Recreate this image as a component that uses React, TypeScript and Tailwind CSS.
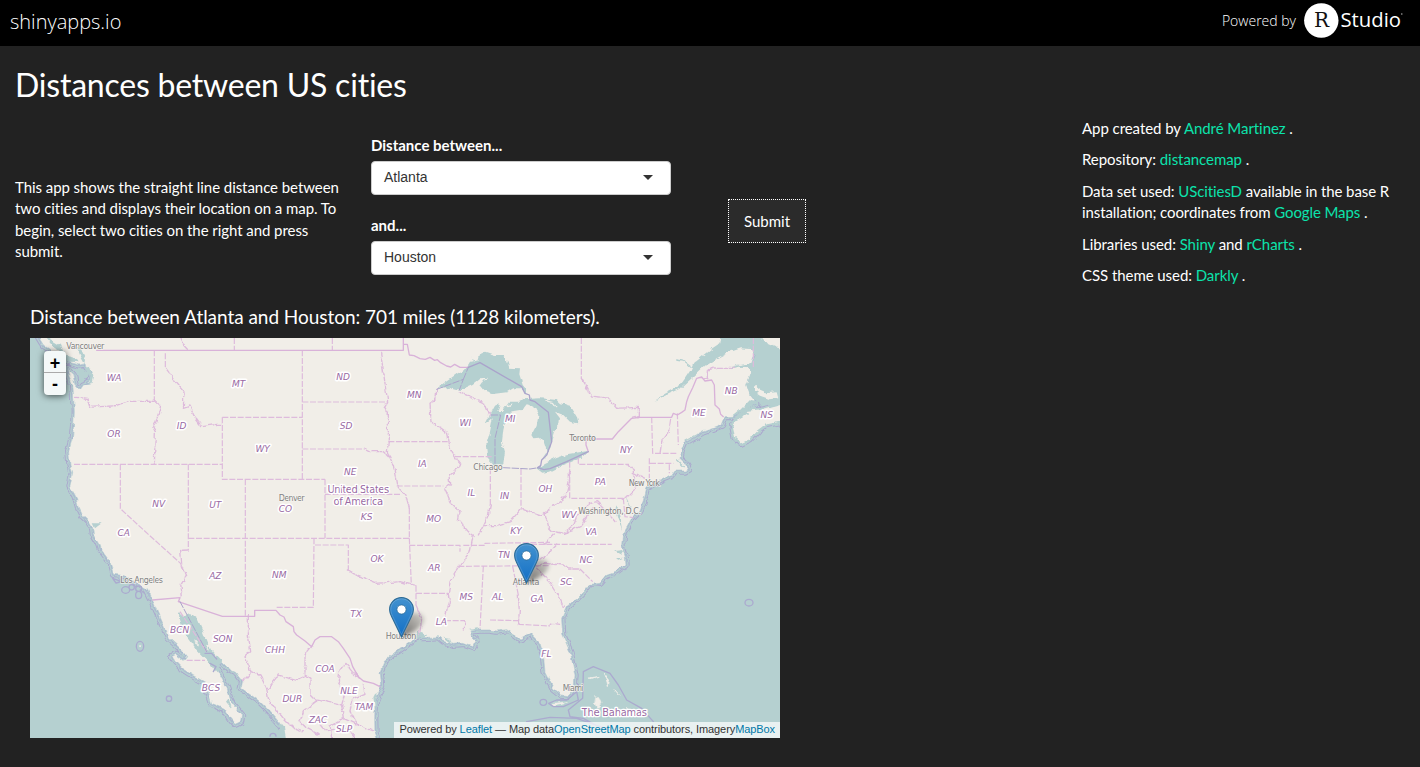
import React from "react";

const WATER = "#b5d0d0";
const LAND = "#f1eee8";

const MAINLAND =
  "M22 0L40 30 75 55 105 72 125 84 150 90 165 86 168 98 190 108 180 135 172 140 185 143 160 150 150 165 136 150 128 118 112 102 118 125 128 150 131 190 133 230 131 270 127 310 116 350 120 388 128 415 120 455 135 480 145 515 160 545 178 562 188 578 190 600 205 625 210 640 240 680 250 718 285 722 325 748 352 764 365 790 375 815 398 868 415 908 450 940 470 965 462 976 438 958 425 965 436 980 455 1000 490 1022 525 1042 535 1075 545 1105 580 1120 600 1150 615 1168 632 1160 635 1140 612 1112 600 1090 590 1060 575 1030 562 1005 550 985 560 972 575 980 595 1000 615 1010 638 1040 634 1060 660 1078 690 1100 720 1130 750 1165 765 1190 770 1230 1050 1230 1035 1195 1034 1150 1036 1100 1055 1055 1050 1010 1062 980 1100 950 1135 925 1150 912 1165 905 1180 908 1225 905 1240 918 1270 928 1300 925 1328 935 1338 918 1325 905 1320 888 1350 885 1380 885 1400 888 1430 884 1455 900 1470 912 1500 895 1530 925 1540 960 1545 1010 1570 1060 1595 1080 1612 1082 1632 1062 1635 1020 1620 950 1598 900 1595 850 1610 815 1640 790 1665 765 1680 745 1710 742 1730 718 1760 708 1788 688 1785 660 1775 630 1778 600 1795 570 1802 555 1830 525 1840 500 1850 458 1900 432 1925 422 1935 408 1965 408 1975 402 1965 385 1950 370 1955 345 1965 322 1990 308 2020 290 2050 280 2075 270 2085 245 2110 244 2140 225 2180 205 2160 180 2150 150 2165 110 2150 95 2125 90 2100 98 2140 92 2165 85 2175 55 2165 40 2110 35 2075 0Z";
const NOVA_SCOTIA =
  "M2108 270L2120 255 2155 235 2150 228 2200 222 2260 205 2260 258 2210 268 2180 290 2160 312 2132 325 2115 308Z";
const PEI = "M2172 155L2180 148 2182 165 2205 175 2240 172 2245 190 2220 193 2190 182 2172 170Z";
const CAPE_BRETON = "M2192 0L2215 28 2240 38 2260 44 2260 0Z";
const ST_LAWRENCE =
  "M1870 198L1905 176 1945 156 1962 135 1982 105 1990 86 2015 66 2050 40 2068 28 2072 0 2260 0 2260 220 2185 200 2160 180 2150 150 2165 110 2150 95 2125 96 2095 100 2130 90 2165 85 2178 60 2165 42 2130 40 2095 52 2060 70 2025 92 1998 118 1972 142 1950 162 1910 180Z";
const SUPERIOR =
  "M1220 163L1245 145 1280 120 1305 105 1320 80 1335 78 1325 68 1345 75 1350 58 1365 50 1395 60 1418 60 1430 75 1438 98 1470 100 1468 118 1478 150 1485 158 1485 175 1470 160 1450 160 1430 172 1395 176 1360 165 1348 150 1358 136 1375 128 1350 130 1325 150 1290 165 1270 160 1255 155Z";
const MICHIGAN =
  "M1390 390L1372 370 1368 330 1380 290 1388 250 1366 268 1380 240 1395 212 1410 205 1402 228 1415 228 1435 200 1470 200 1480 193 1530 190 1580 195 1590 205 1620 212 1640 245 1645 265 1620 260 1600 240 1575 230 1590 250 1588 270 1572 290 1562 325 1553 355 1535 372 1550 350 1540 320 1530 308 1510 310 1504 300 1520 270 1525 240 1510 210 1490 205 1472 228 1432 235 1420 285 1416 320 1425 350 1420 385Z";
const ERIE = "M1522 400L1545 384 1575 370 1610 358 1675 347 1655 368 1625 380 1595 392 1560 410 1540 413Z";
const GULF_OF_CALIFORNIA =
  "M447 832L460 842 480 834 502 850 515 880 530 920 545 948 575 978 570 1000 562 1015 540 985 520 965 500 945 480 915 458 890 448 860Z";

const STRAIGHT =
  "M373 46V195M406 55V98M132 388H577M271 388V521L355 598 455 688M475 388V645M577 247H817M577 247V433H885M817 46V433M646 433V843M475 610H1138M885 433V610M885 478H1115M817 201H1073M817 342H1005M1075 320H1253M1100 453H1240M1275 365H1385M1381 400V510M1473 402V515M1619 380V490H1780M1645 368V388H1795M1138 520V610M852 610V630H955V705M852 610L850 817H738M1138 631H1290V650M1158 775H1255M1138 610L1144 750M1300 631H1365V625L1560 622M1285 694L1560 692M1360 694L1350 880M1448 694L1465 780M1380 855L1465 857 1468 868 1560 873M1480 628H1745M1650 702L1688 740M1865 247L1868 355H1940M1860 385H1930M1918 388V415M1942 235L1945 330M1654 9V130M613 9V46M907 9V46M1245 857H1305M1158 752V810M1780 490L1785 545 1810 548M470 976H525M1858 370V430M2170 9V100M450 830L530 950";
const RIVERS =
  "M373 195L392 213 378 260 368 275 376 290 373 388M406 98L430 130 462 168 460 220 480 213 497 250 515 275 560 268 577 268M137 187L170 190 180 217 260 212 300 199 373 199M475 645L452 646 455 688 470 722 452 750 457 785M1005 342L1020 350 1060 350 1075 365M1052 50L1060 110 1073 200 1063 215 1075 235V320L1072 350 1090 390 1100 450 1130 490 1138 520M1220 165L1218 190 1200 205 1203 260 1250 295 1255 330 1275 365 1292 385 1285 400 1260 420 1262 450 1243 460 1260 500 1290 530 1285 555 1315 590 1330 600 1320 650 1290 690 1260 740 1255 780 1258 800 1245 850M1305 857L1303 885M1381 510L1375 540 1360 572 1345 600M1360 572H1400L1440 560 1475 520 1500 530 1530 540 1550 535 1565 515 1590 500 1610 475 1618 440V400M1780 490L1800 480 1815 465 1820 445 1810 420V405L1795 388M1810 415L1848 435M1285 170L1320 185 1365 205 1378 240M955 705L980 720 1040 745 1110 740 1145 750H1158M1158 810L1175 850 1168 905M1465 780L1468 830 1465 868M1560 873L1568 865 1590 868M1520 700L1560 740 1585 780 1600 815M1520 695L1540 685 1600 690 1615 702H1650M1580 630L1560 650 1520 680M1545 535L1555 575 1570 590 1600 595 1630 570 1640 545 1680 505 1700 500 1730 530 1755 560M1570 600L1545 628M1925 250L1920 285 1900 310 1893 355M1654 130L1685 183 1735 190 1760 220 1825 217V245L1805 250M2015 128H2035V105L2060 97 2110 97M1600 595L1650 575 1690 520M655 844L655 900 662 950 645 965 663 1010 640 1040M663 1010L690 1020 710 1060 715 1090 735 1120 760 1150 790 1180 820 1190M715 1060L745 1020 800 1037 825 1025M845 935L825 960 825 1020 840 1030 840 1080 860 1100 820 1130 810 1160 830 1180 870 1200M985 1030L945 985 930 1005 925 1040 945 1075 935 1110 860 1095M1000 1050L1005 1075 970 1090 960 1130 985 1170 1030 1185M935 1110L940 1150 900 1170 905 1209M940 1150L985 1170M870 1165L890 1190 950 1180 975 1209M450 9L460 30 475 46";
const NATIONAL =
  "M200 46H1120V9M1120 28H1132L1138 60 1152 62 1170 71 1186 73 1200 67 1214 76 1222 74 1232 83 1250 93 1262 96 1274 88 1290 97 1315 97M1675 350L1668 330 1668 312H1747L1765 290 1805 250 1830 247H1925L1930 235 1942 240 1955 232 1965 225 1970 200 1975 185 1988 158 2000 130 2015 126 2025 138 2045 135 2053 150 2055 210 2068 222 2072 238 2080 245M368 795L450 788 445 800 577 844H674V826H738L750 840 762 846 768 860 790 875 792 890 800 900 825 918 845 935 855 915 870 905 905 905 925 920 940 940 960 970 968 995 985 1025 1000 1038 1030 1045 1050 1055";
const LAKE_LINES = "M1395 385V310L1412 240 1378 240M1220 163L1300 133 1288 165M1300 133L1315 97M1420 398L1500 402 1525 398M450 800L530 950";
const SEA_LINES =
  "M1660 1010L1690 995 1740 1015 1765 1050 1790 1095 1835 1120 1870 1160M1660 1010L1658 1090 1615 1125 1620 1145 1660 1150 1700 1172M1490 1160L1560 1147 1640 1150 1740 1185M2145 803A12 10 0 1 1 2169 803A12 10 0 1 1 2145 803M319 934A11 15 0 1 1 341 934A11 15 0 1 1 319 934M409 1091A8 8 0 1 1 425 1091A8 8 0 1 1 409 1091M1530 1102A10 9 0 1 1 1550 1102A10 9 0 1 1 1530 1102M1556 1105L1580 1095 1610 1095 1640 1070 1645 1095 1600 1115 1570 1115ZM275 765A12 10 0 1 1 299 765A12 10 0 1 1 275 765M297 757A8 8 0 1 1 313 757A8 8 0 1 1 297 757M317 780A9 11 0 1 1 335 780A9 11 0 1 1 317 780M317 761A9 8 0 1 1 335 761A9 8 0 1 1 317 761M248 730L275 740 258 744ZM525 955L545 955 560 972M540 985L558 995 550 1010M720 1204A9 9 0 0 1 738 1204";
const ISLANDS =
  "M1675 1032L1705 1027 1680 1034ZM1720 1015L1738 1038 1735 1055 1729 1035ZM1698 1085L1706 1088 1713 1105 1702 1120 1694 1105ZM1755 1065L1770 1082 1764 1076ZM1790 1115L1805 1135ZM1570 1105L1615 1100 1600 1107 1572 1112ZM492 915L506 930 495 925ZM528 930L538 930 534 945ZM329 932L333 932 331 938Z";
const INLETS =
  "M162 100L178 95 182 110 193 120 188 140 178 143 182 125 170 115ZM152 40L168 75 165 88 150 60 140 35ZM1760 505L1768 540 1776 585 1766 560 1756 525ZM1788 488L1798 510 1806 520 1794 512ZM188 565L215 565 195 580ZM1752 648L1778 645 1770 658ZM1758 670L1780 668 1765 674ZM596 1090L605 1120 588 1100ZM750 1170L765 1172 770 1209 750 1209ZM1040 1070L1036 1130 1030 1090ZM1165 890L1188 900 1182 908 1150 912ZM1240 905L1260 908 1265 925ZM1315 885L1345 880 1340 888ZM2160 195L2190 200 2140 232 2100 250 2130 225ZM80 55L120 62 150 82 120 80ZM40 0L90 30 100 55 70 35Z";

type Label = [string, number, number];
const STATES: Label[] = [
  ["WA", 252, 138], ["OR", 252, 307], ["ID", 455, 283], ["MT", 626, 155], ["WY", 698, 350], ["NV", 386, 516],
  ["UT", 556, 518], ["CA", 281, 604], ["CO", 766, 532], ["ND", 939, 136], ["SD", 948, 283], ["MN", 1153, 189],
  ["WI", 1306, 273], ["MI", 1441, 260], ["NE", 961, 420], ["IA", 1177, 395], ["KS", 1010, 556], ["MO", 1211, 560],
  ["IL", 1324, 482], ["IN", 1424, 492], ["KY", 1458, 597], ["OH", 1546, 471], ["PA", 1711, 450], ["NY", 1788, 355],
  ["ME", 2007, 243], ["NB", 2104, 178], ["NS", 2210, 248], ["WV", 1617, 550], ["VA", 1683, 599], ["AZ", 556, 733],
  ["NM", 748, 728], ["OK", 1041, 680], ["AR", 1213, 708], ["TN", 1422, 669], ["NC", 1668, 683], ["SC", 1608, 750],
  ["GA", 1521, 801], ["AL", 1403, 796], ["MS", 1309, 796], ["LA", 1234, 871], ["TX", 978, 847], ["FL", 1549, 966],
  ["BCN", 449, 893], ["SON", 578, 920], ["CHH", 735, 953], ["BCS", 543, 1067], ["COA", 885, 1012],
  ["NLE", 957, 1077], ["DUR", 787, 1102], ["TAM", 1002, 1126], ["ZAC", 864, 1163], ["SLP", 942, 1190],
];
const CITIES: [string, number, number, number][] = [
  ["Vancouver", 166, 42, 114], ["Denver", 785, 498, 78], ["Chicago", 1374, 405, 88], ["Toronto", 1658, 318, 80],
  ["New York", 1843, 454, 94], ["Washington, D.C.", 1739, 536, 188], ["Los Angeles", 335, 745, 128],
  ["Atlanta", 1488, 751, 80], ["Houston", 1113, 911, 92], ["Miami", 1629, 1068, 62],
];
const COUNTRIES: [string, number, number, number][] = [
  ["United States", 985, 473, 185], ["of America", 985, 509, 149], ["The Bahamas", 1753, 1143, 196],
];

function BaseMap() {
  return (
    <svg className="block h-[400px] w-[750px]" viewBox="0 9 2250 1200" fontFamily="'DejaVu Sans', sans-serif">
      <defs>
        <filter id="rough" filterUnits="userSpaceOnUse" x="-20" y="-20" width="2300" height="1260">
          <feTurbulence type="fractalNoise" baseFrequency="0.045" numOctaves="2" seed="4" result="n" />
          <feDisplacementMap in="SourceGraphic" in2="n" scale="16" xChannelSelector="R" yChannelSelector="G" />
        </filter>
      </defs>
      <rect width="2250" height="1220" fill={WATER} />
      <g strokeLinejoin="round" strokeLinecap="round">
        <g filter="url(#rough)">
          <path d={MAINLAND + NOVA_SCOTIA} fill="none" stroke="#aba9ce" strokeWidth="22" />
          <path d={MAINLAND + NOVA_SCOTIA} fill="none" stroke={WATER} strokeWidth="16" />
          <path d={MAINLAND} fill="none" stroke="#abb9d0" strokeWidth="8" />
          <path d={MAINLAND + NOVA_SCOTIA} fill={LAND} stroke={WATER} strokeWidth="2" />
          <path d={ST_LAWRENCE} fill={WATER} />
          <path d={NOVA_SCOTIA + PEI + CAPE_BRETON} fill={LAND} />
          <path d={SUPERIOR + MICHIGAN + ERIE + GULF_OF_CALIFORNIA + INLETS} fill={WATER} />
          <path d="M1940 75L1960 78 1980 94M180 100L190 120M1940 372L1960 392M1965 318L2000 300" fill="none" stroke={WATER} strokeWidth="4" />
          <path d="M1545 197L1570 202 1580 215M1430 212L1445 208M1380 230L1372 240" fill="none" stroke={LAND} strokeWidth="4" />
          <path d={ISLANDS} fill={LAND} stroke={LAND} strokeWidth="2" />
          <path d={RIVERS} fill="none" stroke="#debbdc" strokeWidth="4" strokeDasharray="18 5" />
        </g>
        <path d={STRAIGHT} fill="none" stroke="#debbdc" strokeWidth="3.6" strokeLinecap="butt" strokeDasharray="18 5" />
        <path d={NATIONAL} fill="none" stroke="#d9b2d9" strokeWidth="4" />
        <path d={LAKE_LINES} fill="none" stroke="#aaa3cb" strokeWidth="3" strokeDasharray="20 6" />
        <path d="M1315 97L1350 83 1475 155 1485 175 1498 180 1500 195M1500 195L1515 200 1555 232 1565 320 1550 360 1535 375 1532 392 1523 398 1542 404 1560 401 1610 380 1675 350" fill="none" stroke="#aaa3cb" strokeWidth="4" />
        <path d={SEA_LINES} fill="none" stroke="#abaacf" strokeWidth="4" />
      </g>
      <g textAnchor="middle" strokeLinejoin="round" style={{ paintOrder: "stroke" }}>
        {CITIES.map(([t, x, y, w]) => (
          <text key={t} x={x} y={y} textLength={w} fontSize="24" fill="#808080" stroke="#f6f4f0" strokeOpacity=".75" strokeWidth="5">
            {t}
          </text>
        ))}
        {STATES.map(([t, x, y]) => (
          <text key={t} x={x} y={y} fontSize="27" fontStyle="italic" fill="#996aa3" stroke="#fff" strokeWidth="9">
            {t}
          </text>
        ))}
        {COUNTRIES.map(([t, x, y, w]) => (
          <text key={t} x={x} y={y} textLength={w} fontSize="30" fill="#996aa3" stroke="#fff" strokeWidth="8">
            {t}
          </text>
        ))}
      </g>
    </svg>
  );
}

function Pin({ className, id }: { className: string; id: string }) {
  return (
    <svg className={"absolute h-[44px] w-[48px] " + className} viewBox="0 0 48 44">
      <defs>
        <linearGradient id={id} x1="0" y1="0" x2="0" y2="1">
          <stop offset="0" stopColor="#4392cf" />
          <stop offset="1" stopColor="#126fc6" />
        </linearGradient>
        <linearGradient id={id + "g"} x1="0" y1="1" x2="1" y2="0">
          <stop offset="0" stopColor="#000" stopOpacity=".55" />
          <stop offset="1" stopColor="#000" stopOpacity=".12" />
        </linearGradient>
        <filter id={id + "s"} x="-50%" y="-50%" width="200%" height="200%">
          <feGaussianBlur stdDeviation="1.9" />
        </filter>
      </defs>
      <path d="M13 40L18 20C23 13 36 15 35 23C33 31 22 37 13 40Z" fill={`url(#${id}g)`} filter={`url(#${id}s)`} />
      <path
        d="M12.5 .6C5.9 .6 .6 6 .6 12.4C.6 15 1.5 17.4 2.7 19.8L12.5 40L22.3 19.8C23.5 17.4 24.4 15 24.4 12.4C24.4 6 19.1 .6 12.5 .6Z"
        fill={`url(#${id})`}
        stroke="#2e6c97"
        strokeWidth="1.1"
      />
      <path d="M12.5 1.8C6.5 1.8 1.8 6.6 1.8 12.4C1.8 14.8 2.6 17 3.7 19.3L12.5 37.5L21.3 19.3C22.4 17 23.2 14.8 23.2 12.4C23.2 6.6 18.5 1.8 12.5 1.8Z" fill="none" stroke="#fff" strokeOpacity=".16" />
      <circle cx="12.5" cy="12.5" r="4.6" fill="#fff" stroke="#2e6c97" strokeWidth=".8" />
    </svg>
  );
}

function SelectBox({ label, value }: { label: string; value: string }) {
  return (
    <div>
      <label className="mb-[5px] block text-[15px] leading-[22px] font-bold">{label}</label>
      <button className="flex h-[34px] w-[300px] items-center justify-between rounded border border-[#ccc] bg-white pr-[17px] pl-3 font-['Liberation_Sans',sans-serif] text-[14px] tracking-normal text-[#333]">
        <span>{value}</span>
        <svg className="mb-0.5 h-[5px] w-[10px]" viewBox="0 0 10 5">
          <path d="M0 0H10L5 5Z" fill="#333" />
        </svg>
      </button>
    </div>
  );
}

function A({ children }: { children: React.ReactNode }) {
  return <a href="#" className="text-[#0ce3ac]">{children}</a>;
}

export default function App() {
  return (
    <div className="h-[767px] w-[1420px] overflow-hidden bg-[#222] font-['Lato',sans-serif] text-[15px] leading-[21.43px] text-white [font-variant-ligatures:none]">
      <header className="flex h-[46px] items-start justify-between bg-black pr-[17px] pl-[10px] font-['Open_Sans',sans-serif] font-light">
        <span className="pt-[8px] text-[20px] leading-[28px]">shinyapps.io</span>
        <div className="flex items-start">
          <span className="pt-[11px] text-[14px] leading-[20px]">Powered by</span>
          <svg className="ml-2 h-[40px] w-[99px]" viewBox="0 0 99 40">
            <circle cx="17.3" cy="20.5" r="17.2" fill="#fff" />
            <text x="17.5" y="27.4" textAnchor="middle" fontFamily="'DejaVu Serif', serif" fontWeight="400" fontSize="20" fill="#111">R</text>
            <text x="36.5" y="27.4" textLength="60.5" lengthAdjust="spacingAndGlyphs" fontFamily="'Open Sans', sans-serif" fontWeight="400" fontSize="20.5" fill="#fff">Studio</text>
            <circle cx="97.8" cy="14" r=".8" fill="#aaa" />
          </svg>
        </div>
      </header>

      <div className="flex">
        <main className="w-[1067px] pl-[15px]">
          <h2 className="pt-[21px] text-[32px] leading-[35px] tracking-[-0.22px]">Distances between US cities</h2>
          <section className="mt-[31px] flex h-[142px]">
            <p className="mt-[44px] w-[326px] tracking-[-0.06px]">
              This app shows the straight line distance between two cities and displays their location on a map. To begin, select two cities on the right and press submit.
            </p>
            <div className="ml-[30px] flex flex-col gap-[19px] pt-px">
              <SelectBox label="Distance between..." value="Atlanta" />
              <SelectBox label="and..." value="Houston" />
            </div>
            <button className="mt-[66px] ml-[57px] h-[44px] w-[78px] border border-dotted border-white bg-[#2b2b2b] pt-px text-[15px]">Submit</button>
          </section>
          <section className="ml-[15px] pt-[31px]">
            <h4 className="text-[19px] leading-[21px] tracking-[-0.04px]">Distance between Atlanta and Houston: 701 miles (1128 kilometers).</h4>
            <div className="relative mt-[11px] h-[400px] w-[750px] overflow-hidden">
              <BaseMap />
              <Pin id="houston" className="top-[259px] left-[359px]" />
              <Pin id="atlanta" className="top-[205px] left-[484px]" />
              <div className="absolute top-[13px] left-[14px] flex w-[22px] flex-col rounded-[4px] bg-[#f4f8f8] font-['Liberation_Sans',sans-serif] text-[18px] font-bold text-black shadow-[0_1px_7px_rgba(0,0,0,.65)]">
                <button className="h-[22px] border-b border-[#aaa] leading-[24px]">+</button>
                <button className="h-[22px] leading-[22px]">-</button>
              </div>
              <div className="absolute right-0 bottom-0 h-[16px] bg-white/70 px-[5px] font-['Liberation_Sans',sans-serif] text-[11px] leading-[15px] tracking-[-0.085px] whitespace-nowrap text-[#333]">
                Powered by <span className="text-[#0078a8]">Leaflet</span> — Map data<span className="text-[#0078a8]">OpenStreetMap</span> contributors, Imagery<span className="text-[#0078a8]">MapBox</span>
              </div>
            </div>
          </section>
        </main>
        <aside className="flex w-[353px] flex-col gap-[10px] pt-[72px] pr-[15px] pl-[15px] tracking-[-0.06px]">
          <p>App created by <A>André Martinez</A> .</p>
          <p>Repository: <A>distancemap</A> .</p>
          <p className="tracking-[-0.09px]">Data set used: <A>UScitiesD</A> available in the base R installation; coordinates from <A>Google Maps</A> .</p>
          <p>Libraries used: <A>Shiny</A> and <A>rCharts</A> .</p>
          <p>CSS theme used: <A>Darkly</A> .</p>
        </aside>
      </div>
    </div>
  );
}
